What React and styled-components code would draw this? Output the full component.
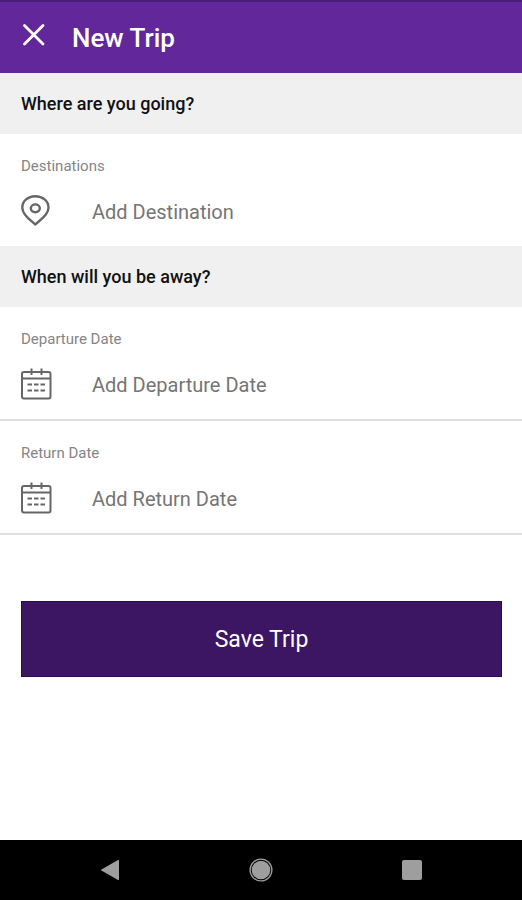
import React, { useState } from 'react';
import styled, { createGlobalStyle } from 'styled-components';

const GlobalStyle = createGlobalStyle`
  * {
    box-sizing: border-box;
  }

  body {
    margin: 0;
    background: #ffffff;
    font-family: Roboto, 'Liberation Sans', sans-serif;
  }
`;

const Screen = styled.div`
  display: flex;
  flex-direction: column;
  min-height: 100vh;
`;

const Header = styled.header`
  display: flex;
  align-items: center;
  gap: 26px;
  height: 73px;
  padding: 0 21px;
  background: #62279b;
  border-top: 2px solid #4b1d7b;
`;

const CloseButton = styled.button`
  display: flex;
  width: 25px;
  height: 32px;
  padding: 0;
  border: none;
  background: none;
  color: #ffffff;
  cursor: pointer;
`;

const Title = styled.h1`
  margin: 0;
  color: #ffffff;
  font-size: 26px;
  font-weight: 500;
  line-height: 32px;
`;

const TripForm = styled.form`
  flex: 1;
`;

const SectionTitle = styled.h2`
  margin: 0;
  padding: 20px 21px;
  background: #f0f0f0;
  color: #111111;
  font-size: 18px;
  font-weight: 500;
  line-height: 21px;
`;

const Field = styled.div`
  padding: 22px 21px 16px;
  border-bottom: ${(props) => (props.$divided ? '2px solid #e0e0e0' : 'none')};
`;

const FieldLabel = styled.label`
  display: block;
  margin-bottom: 18px;
  color: #858585;
  font-size: 15px;
  line-height: 20px;
`;

const FieldRow = styled.div`
  display: flex;
  align-items: center;
  gap: 39px;
  height: 36px;
  color: #666666;
`;

const FieldInput = styled.input`
  flex: 1;
  min-width: 0;
  height: 36px;
  padding: 0;
  border: none;
  outline: none;
  background: none;
  color: #333333;
  font-family: inherit;
  font-size: 20px;

  &::placeholder {
    color: #757575;
    opacity: 1;
  }
`;

const Actions = styled.div`
  padding: 66px 20px 40px 21px;
`;

const SaveButton = styled.button`
  width: 100%;
  height: 76px;
  padding: 0;
  border: 1px solid #2a0a55;
  background: #3c1662;
  color: #ffffff;
  font-family: inherit;
  font-size: 23px;
  cursor: pointer;
`;

const NavBar = styled.nav`
  display: grid;
  grid-template-columns: repeat(3, 1fr);
  height: 60px;
  padding: 0 35px;
  background: #000000;
`;

const NavButton = styled.button`
  display: flex;
  align-items: center;
  justify-content: center;
  padding: 0;
  border: none;
  background: none;
  color: #9e9e9e;
  cursor: pointer;
`;

const CloseIcon = () => (
  <svg width="25" height="25" viewBox="0 0 25 25" fill="none" stroke="currentColor" strokeWidth="2.8" strokeLinecap="round">
    <path d="M3.5 3.5l18.500 18.500M22 3.500L3.500 22" />
  </svg>
);

const PinIcon = () => (
  <svg width="32" height="36" viewBox="0 0 32 36" fill="none" stroke="currentColor" strokeWidth="2.4" strokeLinejoin="round">
    <path d="M14.300 30.500C11 27 1.300 21.500 1.300 13.700C1.300 7 7 2.200 14.300 2.200S27.500 7 27.500 13.700C27.500 21.500 17.500 27 14.300 30.500Z" />
    <ellipse cx="14.300" cy="14.300" rx="4.500" ry="3.900" />
  </svg>
);

const CalendarIcon = () => (
  <svg width="32" height="36" viewBox="0 0 32 36" fill="none" stroke="currentColor" strokeWidth="2">
    <rect x="1" y="5" width="28.500" height="26.500" rx="2" />
    <path d="M1 11.500H29.500M10.500 1.500V8M20.500 1.500V8" />
    <path d="M6.500 17.500h4.500M13 17.500h4.500M19.500 17.500h4.500M6.500 23.500h4.500M13 23.500h4.500M19.500 23.500h4.500" />
  </svg>
);

const FIELD_ICONS = {
  pin: PinIcon,
  calendar: CalendarIcon
};

const TripField = ({ id, label, placeholder, icon, divided, value, onChange }) => {
  const Icon = FIELD_ICONS[icon];

  return (
    <Field $divided={divided}>
      <FieldLabel htmlFor={id}>{label}</FieldLabel>
      <FieldRow>
        <Icon />
        <FieldInput
          id={id}
          name={id}
          type="text"
          placeholder={placeholder}
          value={value}
          onChange={onChange}
        />
      </FieldRow>
    </Field>
  );
};

const App = () => {
  const [trip, setTrip] = useState({ destination: '', departure: '', returning: '' });

  const handleChange = (e) => {
    setTrip({ ...trip, [e.target.name]: e.target.value });
  };

  const handleSubmit = (e) => {
    e.preventDefault();
  };

  return (
    <Screen>
      <GlobalStyle />
      <Header>
        <CloseButton type="button" aria-label="Close">
          <CloseIcon />
        </CloseButton>
        <Title>New Trip</Title>
      </Header>

      <TripForm onSubmit={handleSubmit}>
        <SectionTitle>Where are you going?</SectionTitle>
        <TripField
          id="destination"
          label="Destinations"
          placeholder="Add Destination"
          icon="pin"
          value={trip.destination}
          onChange={handleChange}
        />

        <SectionTitle>When will you be away?</SectionTitle>
        <TripField
          id="departure"
          label="Departure Date"
          placeholder="Add Departure Date"
          icon="calendar"
          divided
          value={trip.departure}
          onChange={handleChange}
        />
        <TripField
          id="returning"
          label="Return Date"
          placeholder="Add Return Date"
          icon="calendar"
          divided
          value={trip.returning}
          onChange={handleChange}
        />

        <Actions>
          <SaveButton type="submit">Save Trip</SaveButton>
        </Actions>
      </TripForm>

      <NavBar>
        <NavButton type="button" aria-label="Back">
          <svg width="20" height="22" viewBox="0 0 20 22" fill="currentColor">
            <path d="M0.500 11L18 1Q19 0.600 19 1.800V20.200Q19 21.400 18 21Z" />
          </svg>
        </NavButton>
        <NavButton type="button" aria-label="Home">
          <svg width="24" height="24" viewBox="0 0 24 24" fill="currentColor">
            <circle cx="12" cy="12" r="9.300" />
            <circle cx="12" cy="12" r="10.900" fill="none" stroke="currentColor" strokeWidth="1.300" />
          </svg>
        </NavButton>
        <NavButton type="button" aria-label="Recent apps">
          <svg width="20" height="20" viewBox="0 0 20 20" fill="currentColor">
            <rect width="20" height="20" rx="2" />
          </svg>
        </NavButton>
      </NavBar>
    </Screen>
  );
};

export default App;
